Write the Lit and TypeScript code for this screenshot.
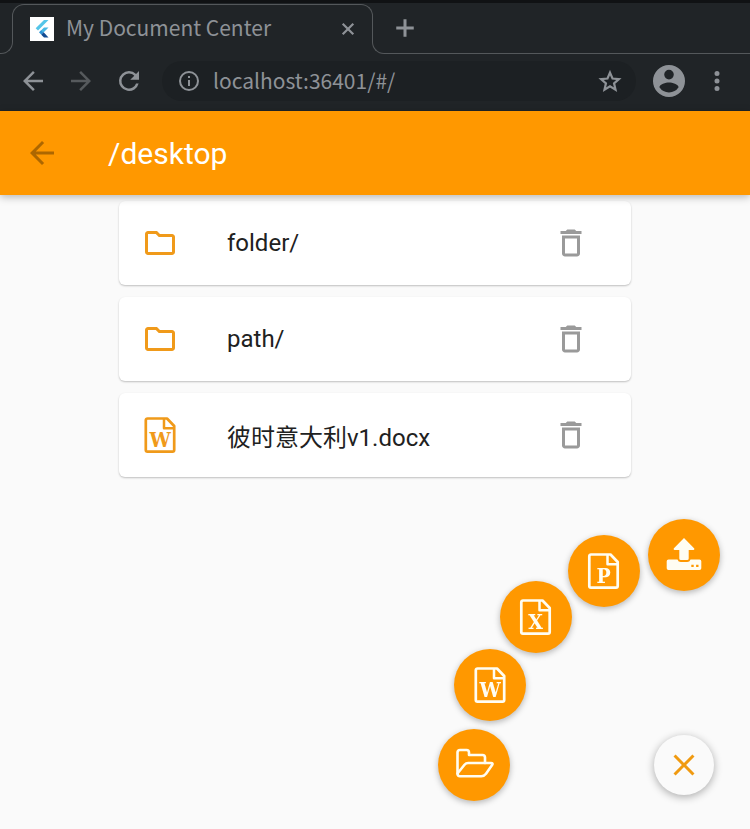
import { LitElement, html, css, svg, type TemplateResult } from "lit";
import { customElement, property } from "lit/decorators.js";
import { styleMap } from "lit/directives/style-map.js";

const shape = (d: string) => svg`<path d=${d} fill="currentColor"></path>`;

const page = (letter: string) => svg`
  <path d="M3 1.5h19.500L29.700 9v23.900a1.700 1.700 0 0 1-1.700 1.700H3a1.700 1.700 0 0 1-1.700-1.700V3.200A1.700 1.700 0 0 1 3 1.500z" fill="none" stroke="currentColor" stroke-width="2.700" stroke-linejoin="round"></path>
  <path d="M19.500 1.500v9.700h10" fill="none" stroke="currentColor" stroke-width="2.500" stroke-linejoin="round"></path>
  <text x="15.500" y="30" text-anchor="middle" class="letter">${letter}</text>`;

const icons: Record<string, { box: string; body: TemplateResult | unknown }> = {
  back: { box: "0 0 24 24", body: shape("M20 11H7.83l5.59-5.59L12 4l-8 8 8 8 1.41-1.41L7.83 13H20v-2z") },
  forward: { box: "0 0 24 24", body: shape("M12 4l-1.41 1.41L16.17 11H4v2h12.17l-5.58 5.59L12 20l8-8z") },
  reload: { box: "0 0 24 24", body: shape("M17.65 6.35A7.96 7.96 0 0 0 12 4a8 8 0 1 0 7.73 10h-2.08A6 6 0 1 1 12 6c1.66 0 3.14.69 4.22 1.78L13 11h7V4l-2.35 2.35z") },
  info: { box: "0 0 24 24", body: shape("M11 7h2v2h-2zm0 4h2v6h-2zm1-9a10 10 0 1 0 0 20 10 10 0 0 0 0-20zm0 18a8 8 0 1 1 0-16 8 8 0 0 1 0 16z") },
  star: {
    box: "0 0 24 24",
    body: svg`<path d="M12 3.600l2.500 5.900 6.400.6-4.850 4.200L17.500 20.600 12 17.250 6.500 20.600l1.450-6.300L3.100 10.100l6.400-.6z" fill="none" stroke="currentColor" stroke-width="2.200"></path>`,
  },
  account: { box: "2 2 20 20", body: shape("M12 2a10 10 0 1 0 0 20 10 10 0 0 0 0-20zm0 3a3 3 0 1 1 0 6 3 3 0 0 1 0-6zm0 14.2a7.2 7.2 0 0 1-6-3.22c.03-1.99 4-3.08 6-3.08s5.970 1.090 6 3.080a7.200 7.200 0 0 1-6 3.220z") },
  more: { box: "0 0 24 24", body: shape("M12 8a2 2 0 1 0 0-4 2 2 0 0 0 0 4zm0 2a2 2 0 1 0 0 4 2 2 0 0 0 0-4zm0 6a2 2 0 1 0 0 4 2 2 0 0 0 0-4z") },
  close: { box: "0 0 24 24", body: shape("M19 6.41L17.59 5 12 10.59 6.41 5 5 6.41 10.59 12 5 17.59 6.410 19 12 13.410 17.590 19 19 17.590 13.410 12z") },
  closeTab: {
    box: "0 0 20 20",
    body: svg`<path d="M4.700 4.700L15.300 15.300M15.300 4.700L4.700 15.300" stroke="currentColor" stroke-width="2.200"></path>`,
  },
  plus: { box: "0 0 24 24", body: shape("M19 13.200h-5.800V19h-2.400v-5.800H5v-2.400h5.800V5h2.400v5.800H19z") },
  folder: { box: "0 0 24 24", body: shape("M9.17 6l2 2H20v10H4V6h5.17M10 4H4c-1.1 0-1.99.9-1.99 2L2 18c0 1.1.9 2 2 2h16c1.1 0 2-.9 2-2V8c0-1.100-.9-2-2-2h-8l-2-2z") },
  trash: { box: "0 0 24 24", body: shape("M6 19c0 1.1.9 2 2 2h8c1.1 0 2-.9 2-2V7H6v12zM8 9h8v10H8V9zm7.5-5l-1-1h-5l-1 1H5v2h14V4h-3.5z") },
  word: { box: "-2.500 0 36 36", body: page("W") },
  excel: { box: "-2 0 36 36", body: page("X") },
  slides: { box: "-2 0 36 36", body: page("P") },
  upload: {
    box: "0 0 36 36",
    body: svg`
      <path d="M18 1L28.300 11.500Q28.600 13 27.300 13H22.700V21.500Q22.700 23 21.200 23H14.800Q13.300 23 13.300 21.500V13H8.700Q7.400 13 7.700 11.500z" fill="currentColor"></path>
      <path fill-rule="evenodd" d="M2.500 22.500H11.500Q12.300 25 14.800 25H21.200Q23.700 25 24.500 22.500H33.500Q35.300 22.500 35.300 24.300V31.200Q35.300 33 33.500 33H2.500Q.7 33 .7 31.200V24.300Q.7 22.500 2.500 22.500zM25.300 27.700v2.400h2.400v-2.400zM30.100 27.700v2.400h2.400v-2.400z" fill="currentColor"></path>`,
  },
  open: {
    box: "0 0 40 40",
    body: svg`<g fill="none" stroke="currentColor" stroke-width="2.600" stroke-linejoin="round" stroke-linecap="round">
      <path d="M3.500 28.500V7.500Q3.500 5 6 5H12.500Q15 5 15 7.500V10H28.500Q31 10 31 12.500V18"></path>
      <path d="M3.500 28.500L10.500 19.800Q12 18 14.200 18H37Q39.500 18 38.100 20.100L32 28.700Q30 31.300 27.300 31.300H6Q3.500 31.300 3.500 28.500z"></path>
    </g>`,
  },
};

@customElement("ui-icon")
export class UiIcon extends LitElement {
  @property() name = "folder";

  static styles = css`
    :host { display: block; width: 36px; height: 36px; }
    svg { display: block; width: 100%; height: 100%; overflow: visible; }
    .letter {
      font: bold 21px "DejaVu Serif Condensed", "DejaVu Serif", serif;
      fill: currentColor;
    }
  `;

  render() {
    const icon = icons[this.name];
    return html`<svg viewBox=${icon.box} aria-hidden="true">${icon.body}</svg>`;
  }
}

const entries = [
  { name: "folder/", icon: "folder" },
  { name: "path/", icon: "folder" },
  { name: "彼时意大利v1.docx", icon: "word" },
];

const actions = [
  { label: "New folder", icon: "open" },
  { label: "New document", icon: "word" },
  { label: "New spreadsheet", icon: "excel" },
  { label: "New presentation", icon: "slides" },
  { label: "Upload", icon: "upload" },
];

const RADIUS = 210;

@customElement("app-root")
export class AppRoot extends LitElement {
  static styles = css`
    :host {
      display: flex;
      flex-direction: column;
      min-height: 100vh;
      position: relative;
      background: #fafafa;
      color: #212121;
      font-family: Roboto, "Noto Sans CJK SC", sans-serif;
    }
    * { box-sizing: border-box; }
    button {
      display: flex;
      align-items: center;
      justify-content: center;
      flex: none;
      padding: 0;
      border: 0;
      background: none;
      color: inherit;
    }
    .browser {
      background: #202427;
      color: #8e9297;
      border-top: 3px solid #101214;
      font-family: "Noto Sans CJK SC", "Noto Sans", sans-serif;
    }
    .tabs { display: flex; height: 51px; align-items: flex-end; }
    .edge { height: 24px; border-bottom: 1px solid #54585b; }
    .edge.left { width: 13px; border-right: 1px solid #54585b; border-bottom-right-radius: 12px; }
    .edge.right {
      display: flex;
      align-items: flex-end;
      flex: 1;
      margin-left: -1px;
      border-left: 1px solid #54585b;
      border-bottom-left-radius: 12px;
    }
    .tab {
      display: flex;
      align-items: center;
      align-self: flex-start;
      width: 361px;
      height: 38px;
      margin: 1px 0 0 -1px;
      padding: 11px 14px 0 17px;
      border: 1px solid #54585b;
      border-bottom: 0;
      border-radius: 12px 12px 0 0;
    }
    .favicon { width: 24px; height: 24px; background: #fff; }
    .tab-title {
      flex: 1;
      margin-left: 12px;
      padding-bottom: 4px;
      font-size: 21px;
      line-height: 24px;
      white-space: nowrap;
    }
    .tab ui-icon { width: 20px; height: 20px; }
    .new-tab { height: 50px; margin-left: 17px; }
    .new-tab ui-icon { width: 30px; height: 30px; }
    .toolbar { display: flex; align-items: center; height: 57px; padding: 0 18px 4px; }
    .toolbar > button { margin-right: 18px; }
    .toolbar > button ui-icon { width: 30px; height: 30px; }
    .toolbar > .dim { color: #565a5d; }
    .address {
      display: flex;
      align-items: center;
      flex: 1;
      min-width: 0;
      height: 40px;
      margin-right: 17px;
      padding: 0 14px 0 15px;
      border-radius: 20px;
      background: #1c2023;
    }
    .address ui-icon { width: 24px; height: 24px; }
    .address input {
      flex: 1;
      min-width: 0;
      margin: 0 12px;
      padding: 0 0 2px;
      border: 0;
      outline: 0;
      background: none;
      color: inherit;
      font: 21px/32px "Noto Sans CJK SC", "Noto Sans", sans-serif;
    }
    .toolbar > .account { margin-right: 17px; }
    .toolbar > .account ui-icon { width: 32px; height: 32px; }
    .toolbar > .more { margin-right: 0; }
    .appbar {
      display: flex;
      align-items: center;
      height: 84px;
      padding-left: 24px;
      background: #ff9800;
      color: #fff;
      box-shadow: 0 2px 8px rgba(0, 0, 0, 0.28);
      z-index: 1;
    }
    .appbar button { color: #ad6700; }
    h1 { margin: 0 0 0 48px; padding-top: 2px; font-size: 30px; line-height: 36px; font-weight: 400; }
    ul {
      display: flex;
      flex-direction: column;
      gap: 12px;
      width: 100%;
      max-width: 512px;
      margin: 6px auto 0;
      padding: 0;
      list-style: none;
    }
    li {
      display: flex;
      align-items: center;
      height: 84px;
      padding: 0 42px 0 23px;
      border-radius: 6px;
      background: #fff;
      box-shadow: 0 1px 2px rgba(0, 0, 0, 0.24);
    }
    li > ui-icon { color: #f09a1a; }
    li a { flex: 1; margin-left: 49px; color: inherit; font-size: 24px; line-height: normal; text-decoration: none; }
    li button { color: #9a9a9a; }
    .dial { position: fixed; right: 66px; bottom: 64px; width: 0; height: 0; }
    .dial button { position: absolute; border-radius: 50%; }
    .dial .action {
      width: 72px;
      height: 72px;
      margin: -36px;
      background: #ff9800;
      color: #fffdf2;
      box-shadow: 0 2px 6px rgba(0, 0, 0, 0.28);
    }
    .action.open ui-icon { width: 40px; height: 40px; }
    .dial .toggle {
      width: 60px;
      height: 60px;
      margin: -30px;
      background: #fafafa;
      color: #f09a10;
      box-shadow: 0 2px 8px rgba(0, 0, 0, 0.32);
    }
  `;

  render() {
    return html`
      <header class="browser">
        <div class="tabs">
          <span class="edge left"></span>
          <div class="tab">
            <svg class="favicon" viewBox="0 0 24 24" aria-hidden="true">
              <path d="M14 3h4.500L8 13.500 5.700 11.200z" fill="#54c5e8"></path>
              <path d="M14 10.500h4.500L13.500 15.500l-2.300-2.300-1.800 1.800z" fill="#48b8e4"></path>
              <path d="M9 15.300l2.300-2.300 2.400 2.400-2.300 2.300z" fill="#2a93d5"></path>
              <path d="M11.300 17.700l2.400-2.400L18.500 20.500H14z" fill="#124a92"></path>
            </svg>
            <span class="tab-title">My Document Center</span>
            <button aria-label="Close tab"><ui-icon name="closeTab"></ui-icon></button>
          </div>
          <div class="edge right">
            <button class="new-tab" aria-label="New tab"><ui-icon name="plus"></ui-icon></button>
          </div>
        </div>
        <nav class="toolbar">
          <button aria-label="Back"><ui-icon name="back"></ui-icon></button>
          <button class="dim" aria-label="Forward"><ui-icon name="forward"></ui-icon></button>
          <button aria-label="Reload"><ui-icon name="reload"></ui-icon></button>
          <div class="address">
            <ui-icon name="info"></ui-icon>
            <input aria-label="Address" .value=${"localhost:36401/#/"} />
            <button aria-label="Bookmark"><ui-icon name="star"></ui-icon></button>
          </div>
          <button class="account" aria-label="Account"><ui-icon name="account"></ui-icon></button>
          <button class="more" aria-label="Menu"><ui-icon name="more"></ui-icon></button>
        </nav>
      </header>
      <header class="appbar">
        <button aria-label="Up one level"><ui-icon name="back"></ui-icon></button>
        <h1>/desktop</h1>
      </header>
      <main>
        <ul>
          ${entries.map(
            (entry) => html`<li>
              <ui-icon name=${entry.icon}></ui-icon>
              <a href="#/${entry.name}">${entry.name}</a>
              <button aria-label="Delete ${entry.name}"><ui-icon name="trash"></ui-icon></button>
            </li>`
          )}
        </ul>
      </main>
      <div class="dial">
        ${actions.map((action, i) => {
          const angle = (Math.PI / 2) * (i / (actions.length - 1));
          const place = {
            left: `${-Math.round(RADIUS * Math.cos(angle))}px`,
            top: `${-Math.round(RADIUS * Math.sin(angle))}px`,
          };
          return html`<button class="action ${action.icon}" style=${styleMap(place)} aria-label=${action.label}>
            <ui-icon name=${action.icon}></ui-icon>
          </button>`;
        })}
        <button class="toggle" aria-label="Close menu"><ui-icon name="close"></ui-icon></button>
      </div>
    `;
  }
}
